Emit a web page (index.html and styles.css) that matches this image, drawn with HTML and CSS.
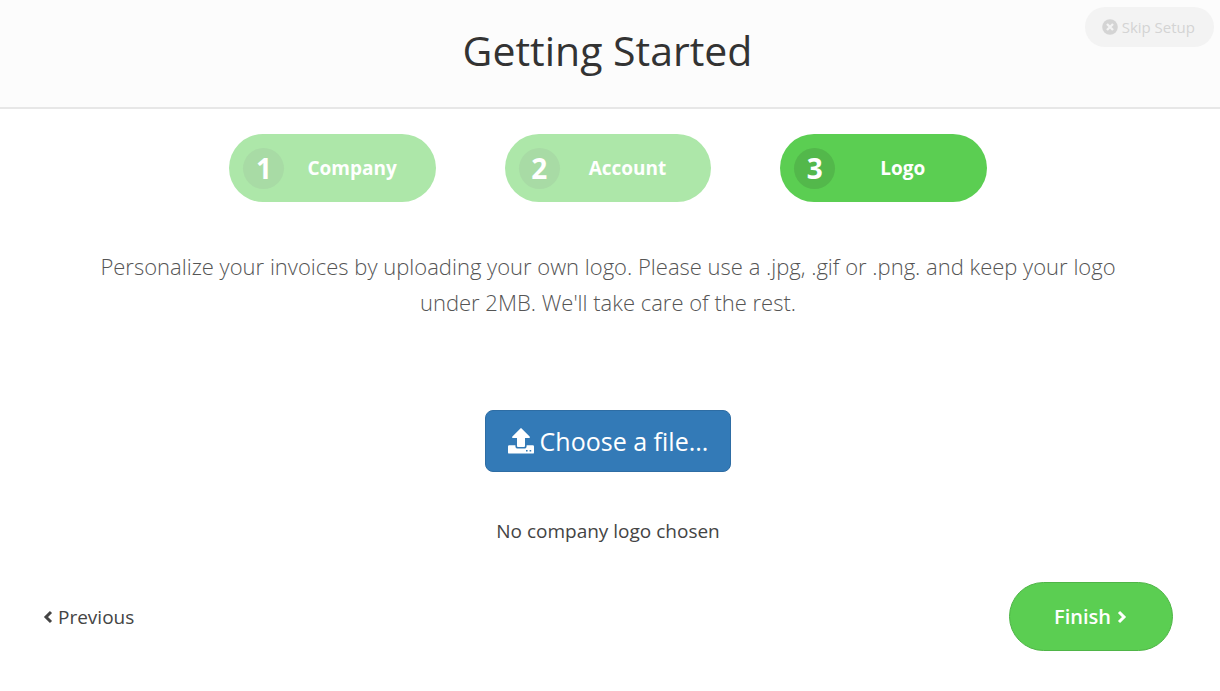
FILE: index.html
```html
<!DOCTYPE html>
<html lang="en">
<head>
<meta charset="utf-8">
<meta name="viewport" content="width=device-width, initial-scale=1">
<title>Getting Started</title>
<link rel="stylesheet" href="styles.css">
</head>

<body>

<header class="header">
  <h1>Getting Started</h1>
  <button type="button" class="skip">
    <svg class="icon-times" viewBox="0 0 16 16" aria-hidden="true">
      <circle cx="8" cy="8" r="7.8" fill="currentColor"/>
      <path d="M5 5l6 6M11 5l-6 6" stroke="#f3f3f3" stroke-width="2.4"/>
    </svg>
    Skip Setup
  </button>
</header>

<main class="wizard">
  <ol class="steps">
    <li class="step"><span class="number">1</span><span class="name">Company</span></li>
    <li class="step"><span class="number">2</span><span class="name">Account</span></li>
    <li class="step active"><span class="number">3</span><span class="name">Logo</span></li>
  </ol>

  <p class="intro">Personalize your invoices by uploading your own logo. Please use a .jpg, .gif or .png. and keep your logo under 2MB. We'll take care of the rest.</p>

  <div class="upload">
    <input type="file" id="logo" class="file-input" accept=".jpg,.gif,.png">
    <label for="logo" class="choose">
      <svg class="icon-upload" viewBox="0 0 26 26" aria-hidden="true">
        <path fill="currentColor" fill-rule="evenodd" d="M12.400.4q.6-.6 1.200 0l8 8q1 1.400-.6 1.600h-4V18q0 1-1 1h-6q-1 0-1-1v-8H5q-1.600-.2-.6-1.600zM1.200 17.200H7.400v.8q0 2.600 2.600 2.600h6q2.600 0 2.600-2.600v-.8h6.200q1.200 0 1.200 1.200v6q0 1.200-1.200 1.200H1.200Q0 25.600 0 24.400v-6q0-1.200 1.200-1.200zM18 22v1.600h1.600V22zM21.600 22v1.600h1.600V22z"/>
      </svg>
      Choose a file...
    </label>
    <p class="chosen">No company logo chosen</p>
  </div>

  <nav class="actions">
    <a href="#" class="previous">
      <svg class="icon-chevron" viewBox="0 0 10 14" aria-hidden="true">
        <path d="M8 2L3 7l5 5" fill="none" stroke="currentColor" stroke-width="3"/>
      </svg>
      Previous
    </a>
    <button type="submit" class="finish">
      Finish
      <svg class="icon-chevron" viewBox="0 0 10 14" aria-hidden="true">
        <path d="M2 2l5 5-5 5" fill="none" stroke="currentColor" stroke-width="3"/>
      </svg>
    </button>
  </nav>
</main>

</body>
</html>
```

FILE: styles.css
```css
* {
  box-sizing: border-box;
}

body {
  margin: 0;
  background: #fff;
  color: #333;
  font-family: "Open Sans", "Noto Sans", sans-serif;
  font-size: 19px;
  line-height: 28px;
}

button {
  font-family: inherit;
  cursor: pointer;
}

.header {
  position: relative;
  padding: 23px 5px 29px 0;
  background: #fcfcfc;
  border-bottom: 2px solid #e7e7e7;
  text-align: center;
}

h1 {
  margin: 0;
  font-size: 41px;
  font-weight: 400;
  line-height: 55px;
}

.skip {
  position: absolute;
  top: 7px;
  right: 6px;
  display: flex;
  align-items: center;
  gap: 4px;
  height: 40px;
  padding: 0 19px 0 17px;
  border: 0;
  border-radius: 20px;
  background: #f3f3f3;
  color: #d4d4d4;
  font-size: 15px;
}

.icon-times {
  width: 16px;
  height: 16px;
}

.wizard {
  padding: 25px 47px 40px 43px;
}

.steps {
  display: grid;
  grid-template-columns: repeat(3, 1fr);
  gap: 69px;
  width: 67%;
  margin: 0 auto 46px;
  padding: 0;
  list-style: none;
}

.step {
  display: flex;
  align-items: center;
  height: 68px;
  padding: 0 14px;
  border-radius: 34px;
  background: #ade7a9;
  color: #fff;
  font-weight: 700;
}

.step.active {
  background: #5bce52;
}

.number {
  width: 41px;
  height: 41px;
  border-radius: 50%;
  background: #a8dba5;
  font-size: 28px;
  line-height: 41px;
  text-align: center;
}

.active .number {
  background: #53b84b;
}

.name {
  flex: 1;
  padding-right: 2px;
  text-align: center;
}

.intro {
  margin: 0 auto 90px;
  padding: 0 50px;
  color: #555;
  font-size: 22px;
  font-weight: 300;
  line-height: 36px;
  text-align: center;
}

.upload {
  display: flex;
  flex-direction: column;
  align-items: center;
}

.file-input {
  position: absolute;
  width: 1px;
  height: 1px;
  opacity: 0;
}

.choose {
  display: flex;
  align-items: center;
  gap: 6px;
  height: 62px;
  padding: 0 22px;
  border: 1px solid #2e6da4;
  border-radius: 8px;
  background: #337ab7;
  color: #fff;
  font-size: 25px;
  cursor: pointer;
}

.icon-upload {
  width: 26px;
  height: 26px;
}

.chosen {
  margin: 45px 0 37px;
  color: #444;
}

.actions {
  display: flex;
  align-items: center;
  justify-content: space-between;
}

.previous {
  display: flex;
  align-items: center;
  gap: 5px;
  color: #444;
  text-decoration: none;
}

.icon-chevron {
  width: 10px;
  height: 14px;
}

.finish {
  display: flex;
  align-items: center;
  gap: 6px;
  height: 69px;
  padding: 0 45px 0 44px;
  border: 1px solid #4fb547;
  border-radius: 35px;
  background: #5bce52;
  color: #fff;
  font-size: 20px;
  font-weight: 600;
}
```
